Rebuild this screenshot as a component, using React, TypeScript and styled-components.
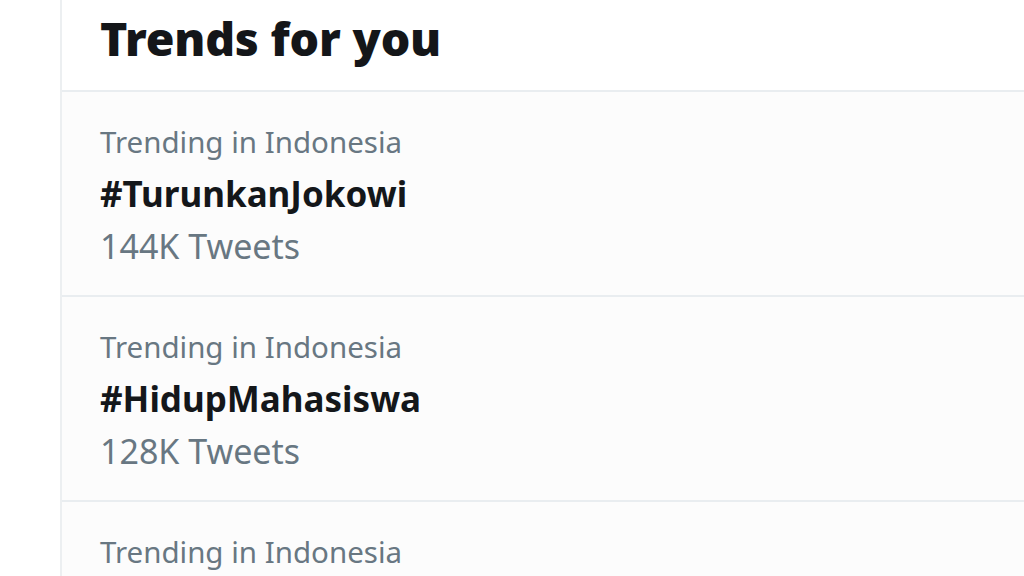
import React from "react";
import styled, { createGlobalStyle } from "styled-components";

const GlobalStyle = createGlobalStyle`
  html, body {
    margin: 0;
    padding: 0;
    background: #fff;
  }
  body {
    font-family: "Noto Sans", "Open Sans", sans-serif;
    overflow: hidden;
  }
`;

const Page = styled.div`
  display: flex;
  width: 1024px;
  height: 576px;
  overflow: hidden;
  background: #fff;
`;

const Gutter = styled.div`
  width: 60px;
  flex-shrink: 0;
`;

const Panel = styled.section`
  flex: 1;
  border-left: 2px solid #eceff1;
  display: flex;
  flex-direction: column;
`;

const Header = styled.header`
  height: 92px;
  box-sizing: border-box;
  flex-shrink: 0;
  padding-left: 38px;
  display: flex;
  align-items: center;
  border-bottom: 2px solid #e9edf0;
  background: #fff;
`;

const Title = styled.h2`
  margin: 0;
  font-size: 46.5px;
  font-weight: 900;
  color: #141619;
  letter-spacing: -0.2px;
  line-height: 1;
  padding-bottom: 13px;
`;

const Trend = styled.div`
  height: 205px;
  flex-shrink: 0;
  padding-left: 38px;
  padding-top: 24px;
  box-sizing: border-box;
  border-bottom: 2px solid #e9edf0;
  background: #fcfcfc;
  display: flex;
  flex-direction: column;
`;

const Meta = styled.div`
  font-size: 29.5px;
  line-height: 52px;
  color: #687782;
`;

const Tag = styled.div`
  font-size: 35px;
  line-height: 52px;
  font-weight: 700;
  color: #14171a;
`;

const Count = styled(Meta)`
  font-size: 34px;
`;

interface ITrend {
  place: string;
  tag?: string;
  tweets?: string;
}

const trends: ITrend[] = [
  { place: "Trending in Indonesia", tag: "#TurunkanJokowi", tweets: "144K Tweets" },
  { place: "Trending in Indonesia", tag: "#HidupMahasiswa", tweets: "128K Tweets" },
  { place: "Trending in Indonesia" },
];

export default function App() {
  return (
    <>
      <GlobalStyle />
      <Page>
        <Gutter />
        <Panel>
          <Header>
            <Title>Trends for you</Title>
          </Header>
          {trends.map((t, i) => (
            <Trend key={i}>
              <Meta>{t.place}</Meta>
              {t.tag && <Tag>{t.tag}</Tag>}
              {t.tweets && <Count>{t.tweets}</Count>}
            </Trend>
          ))}
        </Panel>
      </Page>
    </>
  );
}
